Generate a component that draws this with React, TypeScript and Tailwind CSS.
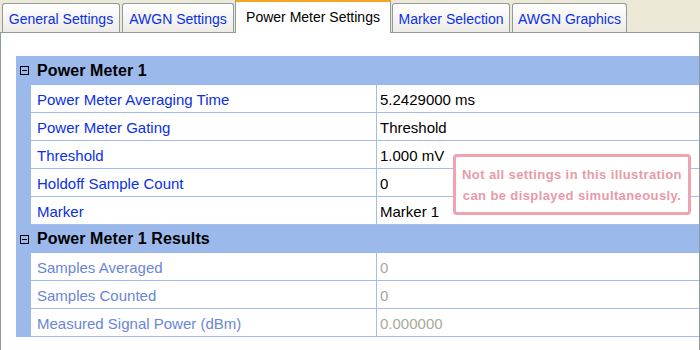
import React from "react";

const tabs = [
  { label: "General Settings", w: "w-[118px]" },
  { label: "AWGN Settings", w: "w-[112px]" },
  { label: "Power Meter Settings", w: "w-[156px]", active: true },
  { label: "Marker Selection", w: "w-[118px]" },
  { label: "AWGN Graphics", w: "w-[115px]" },
];

function Collapse() {
  return (
    <svg width="9" height="9" viewBox="0 0 9 9" className="block">
      <rect x="0.5" y="0.5" width="8" height="8" fill="none" stroke="#000" strokeWidth="1" />
      <line x1="2" y1="4.5" x2="7" y2="4.5" stroke="#000" strokeWidth="1" />
    </svg>
  );
}

function Header({ title, h }: { title: string; h: string }) {
  return (
    <div className={`flex ${h} bg-[#9CB9EC] items-center`}>
      <div className="w-[15px] flex justify-center pl-[1px]">
        <Collapse />
      </div>
      <div className="pl-[6px] text-[16px] font-bold text-black tracking-[0.1px]">{title}</div>
    </div>
  );
}

function Row({ name, value, dim }: { name: string; value: string; dim?: boolean }) {
  return (
    <div className="flex h-[28px]">
      <div className="w-[15px] bg-[#9CB9EC]" />
      <div className="flex flex-1 border-b border-[#A3BDEF]">
        <div
          className={`w-[345px] pl-[6px] pt-[4px] flex items-center text-[15px] ${
            dim ? "text-[#6A86D6]" : "text-[#0A2FE6]"
          }`}
        >
          {name}
        </div>
        <div
          className={`flex-1 border-l border-[#A3BDEF] pl-[3px] pt-[4px] flex items-center text-[15px] ${
            dim ? "text-[#A9A897]" : "text-black"
          }`}
        >
          {value}
        </div>
      </div>
    </div>
  );
}

export default function App() {
  return (
    <div
      className="w-[700px] h-[350px] bg-white relative overflow-hidden"
      style={{ fontFamily: '"Liberation Sans", Arial, sans-serif' }}
    >
      <div className="flex items-end h-[33px] bg-[#ECE9D8] pl-[2px] gap-[2px]">
        {tabs.map((t) =>
          t.active ? (
            <div
              key={t.label}
              className={`${t.w} h-[33px] bg-white border-t-2 border-[#F5A623] border-x border-x-[#919B9C] flex items-center justify-center text-[14px] text-black -mx-[1px] relative z-10 pb-[1px]`}
            >
              {t.label}
            </div>
          ) : (
            <div
              key={t.label}
              className={`${t.w} h-[30px] bg-gradient-to-b from-white to-[#ECEBE6] border border-b-0 border-[#919B9C] rounded-t-[3px] flex items-center justify-center text-[14px] text-[#0A2FE6] pt-[2px]`}
            >
              {t.label}
            </div>
          )
        )}
      </div>
      <div className="absolute left-0 right-0 top-[32px] border-t border-[#919B9C] z-0" />
      <div className="h-[317px] border-l border-r border-[#919B9C] pt-[23px] pl-[15px]">
        <Header title="Power Meter 1" h="h-[29px]" />
        <Row name="Power Meter Averaging Time" value="5.2429000 ms" />
        <Row name="Power Meter Gating" value="Threshold" />
        <Row name="Threshold" value="1.000 mV" />
        <Row name="Holdoff Sample Count" value="0" />
        <Row name="Marker" value="Marker 1" />
        <Header title="Power Meter 1 Results" h="h-[28px]" />
        <Row name="Samples Averaged" value="0" dim />
        <Row name="Samples Counted" value="0" dim />
        <Row name="Measured Signal Power (dBm)" value="0.000000" dim />
      </div>
      <div className="absolute left-[453px] top-[154px] w-[238px] h-[61px] border-[3px] border-[#EFA3AE] rounded-[4px] bg-white flex flex-col items-center justify-center text-[13px] font-bold text-[#E99AA7] leading-[21px] tracking-[0.4px]">
        <div>Not all settings in this illustration</div>
        <div>can be displayed simultaneously.</div>
      </div>
    </div>
  );
}
